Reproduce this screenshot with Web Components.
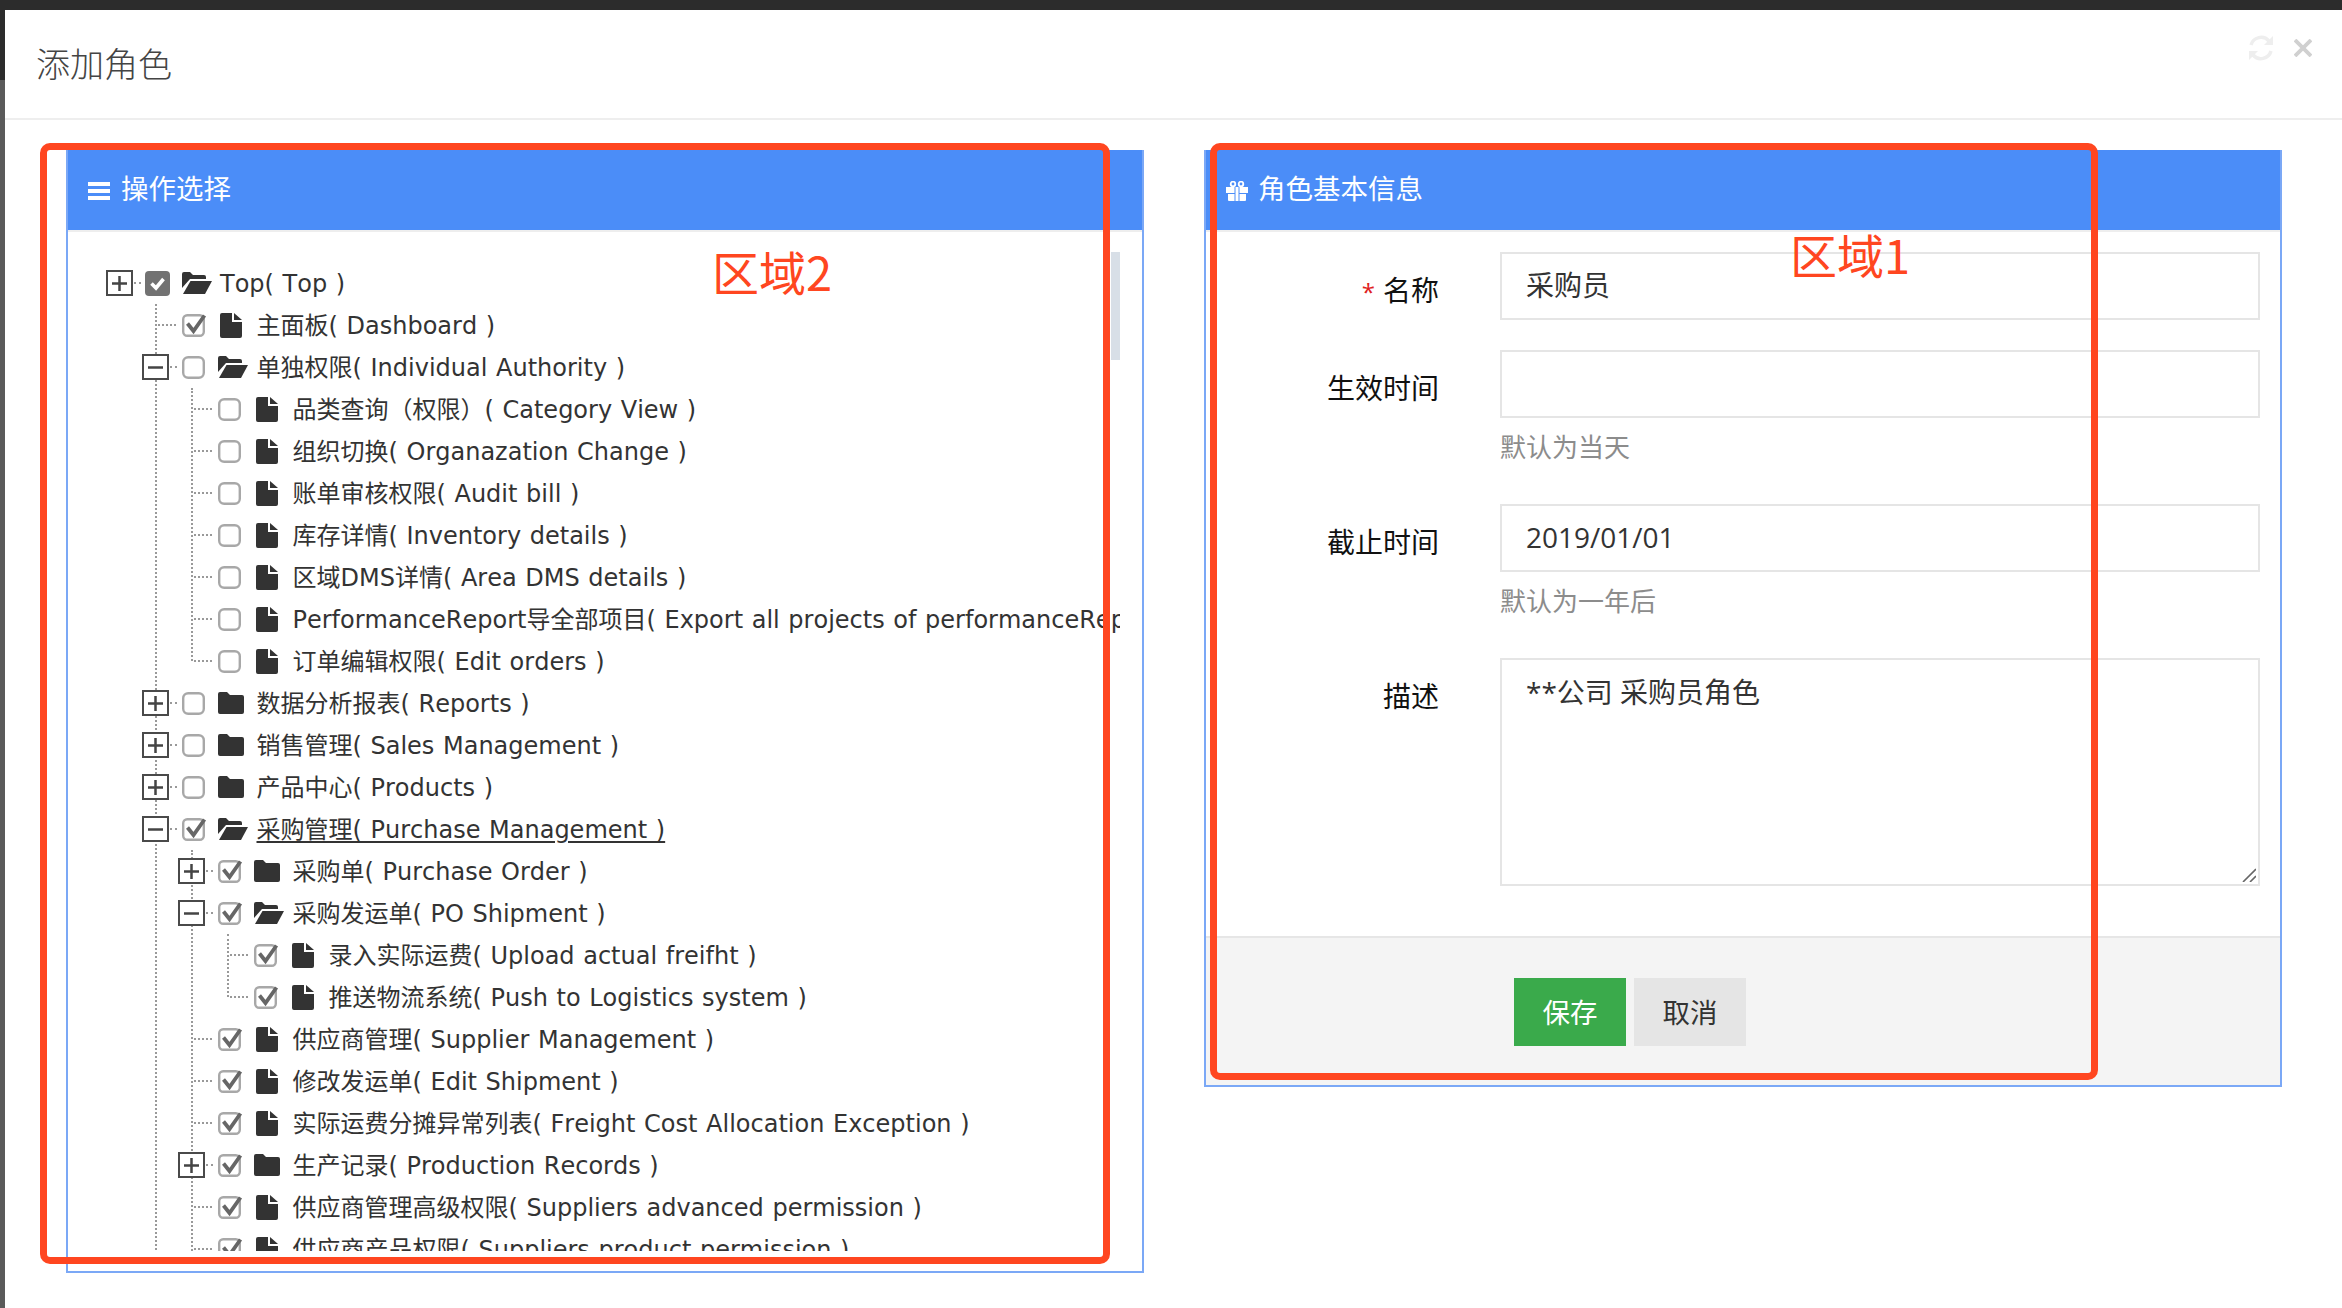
<!DOCTYPE html>
<html lang="zh">
<head>
<meta charset="utf-8">
<title>添加角色</title>
<style>
  html, body { margin: 0; height: 100%; background: #2c2c2c; overflow: hidden; }
</style>
</head>
<body>
<template id="role-dialog-tpl">
  <style>
    :host { display: block; position: relative; width: 2342px; height: 1308px; padding: 10px 0 0 5px; box-sizing: border-box;
      background: linear-gradient(#2c2c2c 80px, #5a5a5a 80px);
      font-family: "Open Sans", "Noto Sans CJK SC", sans-serif; }
    .modal { background: #fff; height: 1298px; }
    .head { display: flex; align-items: center; justify-content: space-between; height: 108px; border-bottom: 2px solid #eee; padding: 0 30px 0 31px; }
    h1 { margin: 0; font-size: 34px; font-weight: 300; color: #444; line-height: 106px; }
    .tools { display: flex; align-items: center; gap: 20px; margin-bottom: 32px; }
    .body { display: flex; align-items: flex-start; gap: 60px; padding: 30px 0 0 61px; }
  </style>
  <div class="modal">
    <div class="head">
      <h1>添加角色</h1>
      <div class="tools">
        <svg width="26" height="26" viewBox="0 0 26 26" fill="none" stroke="#eee" stroke-width="3.5">
          <path d="M3 10a10.500 10.500 0 0 1 18-4"/><path d="M23 16a10.500 10.500 0 0 1-18 4"/>
          <path d="M25 1v9h-9z" fill="#eee" stroke="none"/><path d="M1 25v-9h9z" fill="#eee" stroke="none"/>
        </svg>
        <svg width="18" height="18" viewBox="0 0 18 18" stroke="#d0d0d0" stroke-width="3.8"><path d="M1 1l16 16M17 1L1 17"/></svg>
      </div>
    </div>
    <div class="body"><slot></slot></div>
  </div>
  <slot name="overlay"></slot>
</template>

<template id="panel-box-tpl">
  <style>
    :host { display: block; width: 1078px; box-sizing: border-box; border: 2px solid #7ba8f6; border-top: 0; background: #fff; }
    .bar { display: flex; align-items: center; height: 80px; background: #4b8df8; color: #fff; font-size: 27.5px; border-bottom: 2px solid #eee; }
    .bar span { margin-bottom: 6px; }
  </style>
  <div class="bar"><slot name="icon"></slot><span id="title"></span></div>
  <slot></slot>
</template>

<template id="tree-node-tpl">
  <style>
    :host { display: block; font-family: "DejaVu Sans", "Noto Sans CJK SC", sans-serif; font-size: 24px; color: #333; font-kerning: none; word-spacing: 1px; }
    .row { display: flex; align-items: center; height: 42px; white-space: nowrap; }
    .sw { flex: none; width: 36px; display: flex; align-items: center; }
    .box { flex: none; box-sizing: border-box; width: 27px; height: 26px; border: 2px solid #4a4a4a; background: #fff; display: flex; align-items: center; justify-content: center; position: relative; }
    .dots { flex: 1; border-top: 2px dotted #999; margin: 0 1px; }
    .sw.leaf .dots { margin: 0 2px 0 16px; }
    .chk { flex: none; width: 36px; padding-left: 4px; box-sizing: border-box; display: flex; }
    :host([root]) .chk { padding-left: 3px; }
    .ico { flex: none; width: 42.5px; display: flex; }
    :host([root]) .ico { width: 42px; }
    .ico svg { filter: blur(.3px); }
    .chk svg { filter: blur(.4px); overflow: visible; }
    .txt { flex: none; line-height: 42px; margin-top: 2px; }
    :host([underline]) .txt { text-decoration: underline; text-underline-offset: 3px; }
    .kids { position: relative; padding-left: 36px; }
    .kids::before { content: ""; position: absolute; left: 48.5px; top: 0; bottom: 0; border-left: 2px dotted #999; }
    :host([endline]) > .kids::before { bottom: 21px; }
    .kids.empty { display: none; }
    .kids ::slotted(*) { position: relative; }
  </style>
  <div class="row">
    <div class="sw"></div>
    <div class="chk"></div>
    <div class="ico"></div>
    <span class="txt"></span>
  </div>
  <div class="kids"><slot></slot></div>
</template>

<template id="form-field-tpl">
  <style>
    :host { display: flex; font-size: 28px; margin-bottom: 30px; }
    :host([hint]) { margin-bottom: 28px; }
    .lab { flex: none; width: 233px; height: 68px; text-align: right; line-height: 76px; color: #111; }
    .lab i { font-style: normal; color: #e02020; font-size: 24px; margin-right: 8px; }
    .ctl { margin-left: 61px; width: 760px; }
    .hint { font-size: 26px; line-height: 58px; color: #8c8c8c; }
  </style>
  <div class="lab"></div>
  <div class="ctl"><slot></slot><div class="hint"></div></div>
</template>

<template id="role-form-tpl">
  <style>
    :host { display: block; }
    .fields { padding: 20px 0 50px; }
    .field-in { box-sizing: border-box; height: 68px; border: 2px solid #e5e5e5; padding: 0 24px; line-height: 63px; font-size: 28px; color: #333; }
    .area { position: relative; }
    .area svg { position: absolute; right: 4px; bottom: 4px; }
    textarea { display: block; box-sizing: border-box; width: 760px; height: 228px; border: 2px solid #e5e5e5; padding: 12px 24px; margin: 0; font: 400 28px/40px "Open Sans", "Noto Sans CJK SC", sans-serif; color: #333; outline: 0; background: #fff; resize: none; }
    .foot { display: flex; gap: 8px; height: 149px; padding: 40px 0 0 308px; box-sizing: border-box; border-top: 2px solid #e6e6e6; background: #f4f4f4; }
    button { width: 112px; height: 68px; border: 0; padding: 0 0 2px; font: 400 27.5px "Open Sans", "Noto Sans CJK SC", sans-serif; }
    .ok { background: #3aaa4b; color: #fff; }
    .no { background: #e5e5e5; color: #333; }
    form-field:last-child { margin-bottom: 0; }
  </style>
  <div class="fields">
    <form-field label="名称" required><div class="field-in">采购员</div></form-field>
    <form-field label="生效时间" hint="默认为当天"><div class="field-in"></div></form-field>
    <form-field label="截止时间" hint="默认为一年后"><div class="field-in">2019/01/01</div></form-field>
    <form-field label="描述">
      <div class="area">
        <textarea rows="4">**公司 采购员角色</textarea>
        <svg width="14" height="14" viewBox="0 0 14 14" stroke="#666" stroke-width="1.600"><path d="M1 14L14 1M8 14l6-6"/></svg>
      </div>
    </form-field>
  </div>
  <div class="foot">
    <button class="ok">保存</button>
    <button class="no">取消</button>
  </div>
</template>

<template id="tree-view-tpl">
  <style>
    :host { display: block; position: relative; height: 1039px; padding-top: 20px; box-sizing: border-box; }
    .clip { height: 999px; margin-right: 22px; padding: 10px 0 0 38px; box-sizing: border-box; overflow: hidden; }
    .thumb { position: absolute; right: 22px; top: 20px; width: 9px; height: 108px; background: #d8dfe7; }
  </style>
  <div class="clip"><slot></slot></div>
  <div class="thumb"></div>
</template>

<template id="red-mark-tpl">
  <style>
    :host { display: block; position: absolute; box-sizing: border-box; border: 7px solid #ff4620; border-radius: 10px; pointer-events: none; }
    :host([text]) { border: 0; border-radius: 0; color: #ff4620; font: 400 47px/1 "Noto Sans CJK SC", sans-serif; white-space: nowrap; }
  </style>
  <slot></slot>
</template>

<role-dialog>
  <panel-box title-text="操作选择">
    <svg slot="icon" width="22" height="18" viewBox="0 0 22 18" fill="#fff" style="margin:2px 11px 0 20px"><path d="M0 0h22v4H0zM0 7h22v4H0zM0 14h22v4H0z"/></svg>
    <tree-view>
      <tree-node root text="Top( Top )" sw="plus" check="top" type="open">
        <tree-node text="主面板( Dashboard )" check="on"></tree-node>
        <tree-node text="单独权限( Individual Authority )" sw="minus" type="open" endline>
          <tree-node text="品类查询（权限）( Category View )"></tree-node>
          <tree-node text="组织切换( Organazation Change )"></tree-node>
          <tree-node text="账单审核权限( Audit bill )"></tree-node>
          <tree-node text="库存详情( Inventory details )"></tree-node>
          <tree-node text="区域DMS详情( Area DMS details )"></tree-node>
          <tree-node text="PerformanceReport导全部项目( Export all projects of performanceReport )"></tree-node>
          <tree-node text="订单编辑权限( Edit orders )"></tree-node>
        </tree-node>
        <tree-node text="数据分析报表( Reports )" sw="plus" type="folder"></tree-node>
        <tree-node text="销售管理( Sales Management )" sw="plus" type="folder"></tree-node>
        <tree-node text="产品中心( Products )" sw="plus" type="folder"></tree-node>
        <tree-node text="采购管理( Purchase Management )" sw="minus" check="on" type="open" underline>
          <tree-node text="采购单( Purchase Order )" sw="plus" check="on" type="folder"></tree-node>
          <tree-node text="采购发运单( PO Shipment )" sw="minus" check="on" type="open" endline>
            <tree-node text="录入实际运费( Upload actual freifht )" check="on"></tree-node>
            <tree-node text="推送物流系统( Push to Logistics system )" check="on"></tree-node>
          </tree-node>
          <tree-node text="供应商管理( Supplier Management )" check="on"></tree-node>
          <tree-node text="修改发运单( Edit Shipment )" check="on"></tree-node>
          <tree-node text="实际运费分摊异常列表( Freight Cost Allocation Exception )" check="on"></tree-node>
          <tree-node text="生产记录( Production Records )" sw="plus" check="on" type="folder"></tree-node>
          <tree-node text="供应商管理高级权限( Suppliers advanced permission )" check="on"></tree-node>
          <tree-node text="供应商产品权限( Suppliers product permission )" check="on"></tree-node>
        </tree-node>
      </tree-node>
    </tree-view>
  </panel-box>

  <panel-box title-text="角色基本信息">
    <svg slot="icon" width="22" height="20" viewBox="0 0 22 20" fill="#fff" style="margin:1px 10px 0 20px"><path d="M0 6h8.500v6H0zM13.500 6H22v6h-8.500zM2 13h6.500v7H3a1 1 0 0 1-1-1zM13.500 13H20v6a1 1 0 0 1-1 1h-5.500zM9.500 6h3v14h-3z"/><circle cx="7" cy="3" r="2.300" fill="none" stroke="#fff" stroke-width="1.800"/><circle cx="15" cy="3" r="2.300" fill="none" stroke="#fff" stroke-width="1.800"/></svg>
    <role-form></role-form>
  </panel-box>

  <red-mark slot="overlay" style="left:40px;top:143px;width:1070px;height:1121px"></red-mark>
  <red-mark slot="overlay" style="left:1210px;top:143px;width:888px;height:937px"></red-mark>
  <red-mark slot="overlay" text style="left:712px;top:247px">区域2</red-mark>
  <red-mark slot="overlay" text style="left:1790px;top:230px">区域1</red-mark>
</role-dialog>

<script>
const tpl = id => document.getElementById(id).content.cloneNode(true)

class Plain extends HTMLElement {
  constructor() {
    super()
    this.attachShadow({ mode: 'open' }).appendChild(tpl(this.localName + '-tpl'))
  }
}

customElements.define('role-dialog', class extends Plain {})
customElements.define('tree-view', class extends Plain {})
customElements.define('red-mark', class extends Plain {})
customElements.define('role-form', class extends Plain {})

customElements.define('panel-box', class extends Plain {
  connectedCallback() {
    this.shadowRoot.getElementById('title').textContent = this.getAttribute('title-text')
  }
})

customElements.define('form-field', class extends Plain {
  connectedCallback() {
    const lab = this.shadowRoot.querySelector('.lab')
    lab.textContent = this.getAttribute('label')
    if (this.hasAttribute('required')) {
      const star = document.createElement('i')
      star.textContent = '*'
      lab.prepend(star)
    }
    const hint = this.shadowRoot.querySelector('.hint')
    if (this.hasAttribute('hint')) hint.textContent = this.getAttribute('hint')
    else hint.remove()
  }
})

const ICONS = {
  file: '<svg width="22" height="25" viewBox="0 0 22 25" fill="#333" style="margin:1px 0 0 6px"><path d="M2 0h10v9h10v14a2 2 0 0 1-2 2H2a2 2 0 0 1-2-2V2a2 2 0 0 1 2-2z"/><path d="M14 0l8 7h-8z"/></svg>',
  folder: '<svg width="26" height="22" viewBox="0 0 26 22" fill="#333" style="margin-left:4px"><path d="M2 0h7l3 3h12a2 2 0 0 1 2 2v15a2 2 0 0 1-2 2H2a2 2 0 0 1-2-2V2a2 2 0 0 1 2-2z"/></svg>',
  open: '<svg width="30" height="22" viewBox="0 0 30 22" fill="#333" style="margin-left:4px"><path d="M0 2a2 2 0 0 1 2-2h6l3 3h11a2 2 0 0 1 2 2v2H8L0 16z"/><path d="M8.500 9H30l-7 13H1z"/></svg>'
}

const CHECKS = {
  off: '<svg width="23" height="23" viewBox="0 0 23 23"><rect x="1.200" y="1.200" width="20.600" height="20.600" rx="5" fill="#fff" stroke="#a8a8a8" stroke-width="2.400"/></svg>',
  on: '<svg width="23" height="23" viewBox="0 0 23 23"><rect x="1.200" y="1.200" width="20.600" height="20.600" rx="4" fill="#fff" stroke="#a8a8a8" stroke-width="2.400"/><path d="M5.500 9.500l6 7.500L22.500 1.500" fill="none" stroke="#666" stroke-width="3.800"/></svg>',
  top: '<svg width="25" height="25" viewBox="0 0 25 25"><rect width="25" height="25" rx="4" fill="#727272"/><path d="M6.500 12.500l4.500 4.500 7.500-9" fill="none" stroke="#fff" stroke-width="3.600"/></svg>'
}

customElements.define('tree-node', class extends Plain {
  connectedCallback() {
    const root = this.shadowRoot
    const sw = this.getAttribute('sw')
    const type = this.getAttribute('type') || 'file'
    const check = this.getAttribute('check') || 'off'

    const swEl = root.querySelector('.sw')
    if (sw) {
      const glyph = sw === 'plus' ? 'M1 7.500h15M8.500 0v15' : 'M1 7.500h15'
      swEl.innerHTML = `<div class="box"><svg width="17" height="15" viewBox="0 0 17 15" fill="none" stroke="#444" stroke-width="2.500"><path d="${glyph}"/></svg></div><div class="dots"></div>`
    } else {
      swEl.classList.add('leaf')
      swEl.innerHTML = '<div class="dots"></div>'
    }
    root.querySelector('.chk').innerHTML = CHECKS[check]
    root.querySelector('.ico').innerHTML = ICONS[type]
    root.querySelector('.txt').textContent = this.getAttribute('text')
    if (!this.children.length) root.querySelector('.kids').classList.add('empty')
  }
})
</script>
</body>
</html>
